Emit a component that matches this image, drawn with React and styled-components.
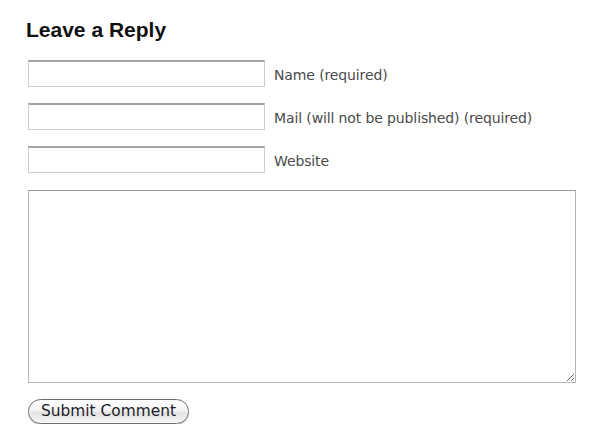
import React from 'react';
import styled, {createGlobalStyle} from 'styled-components';

const GlobalStyle = createGlobalStyle`
    html, body {
        margin: 0;
        padding: 0;
        background: #ffffff;
    }
`;

const Wrapper = styled.div`
    padding: 18px 0 0 28px;
    font-family: "DejaVu Sans", "Liberation Sans", sans-serif;
`;

const Title = styled.h3`
    margin: 0 0 18px -2px;
    font-family: "Liberation Sans", Arial, sans-serif;
    font-size: 21px;
    line-height: 24px;
    font-weight: bold;
    color: #111111;
`;

const Form = styled.form`
    display: flex;
    flex-direction: column;
    align-items: flex-start;
`;

const Row = styled.div`
    display: flex;
    align-items: center;
    gap: 9px;
    margin-bottom: 16px;
`;

const Input = styled.input`
    box-sizing: border-box;
    width: 237px;
    height: 27px;
    margin: 0;
    padding: 3px 5px;
    border: 1px solid #cdcdcd;
    border-top: 2px solid #a4a4a4;
    background: #ffffff;
    outline: none;
    font-family: inherit;
    font-size: 13px;
`;

const Label = styled.label`
    font-size: 14px;
    letter-spacing: -0.12px;
    color: #4a4a4a;
    padding-top: 3px;
`;

const TextArea = styled.textarea`
    box-sizing: border-box;
    width: 548px;
    height: 193px;
    margin: 1px 0 16px;
    padding: 4px;
    border: 1px solid #b4b4b4;
    border-top-color: #9a9a9a;
    background: #ffffff;
    outline: none;
    font-family: inherit;
    font-size: 13px;
`;

const SubmitButton = styled.button`
    box-sizing: border-box;
    width: 161px;
    height: 25px;
    padding: 0 0 1px;
    border: 1px solid #6e6e6e;
    border-radius: 13px;
    background: linear-gradient(to bottom, #ffffff 0%, #f4f4f4 45%, #e2e2e2 55%, #f6f6f6 100%);
    box-shadow: 0 1px 1px rgba(0, 0, 0, 0.25), inset 0 0 0 1px rgba(255, 255, 255, 0.8);
    font-family: "DejaVu Sans", sans-serif;
    font-size: 15.4px;
    color: #1e1e2a;
    cursor: pointer;
`;

const fields = [
  {id: 'author', label: 'Name (required)'},
  {id: 'email', label: 'Mail (will not be published) (required)'},
  {id: 'url', label: 'Website'},
];

export default function App() {
  return (
    <Wrapper>
      <GlobalStyle/>
      <Title>Leave a Reply</Title>
      <Form onSubmit={e => e.preventDefault()}>
        {fields.map(f => (
          <Row key={f.id}>
            <Input id={f.id} type="text"/>
            <Label htmlFor={f.id}>{f.label}</Label>
          </Row>
        ))}
        <TextArea id="comment"/>
        <SubmitButton type="submit">Submit Comment</SubmitButton>
      </Form>
    </Wrapper>
  );
}
